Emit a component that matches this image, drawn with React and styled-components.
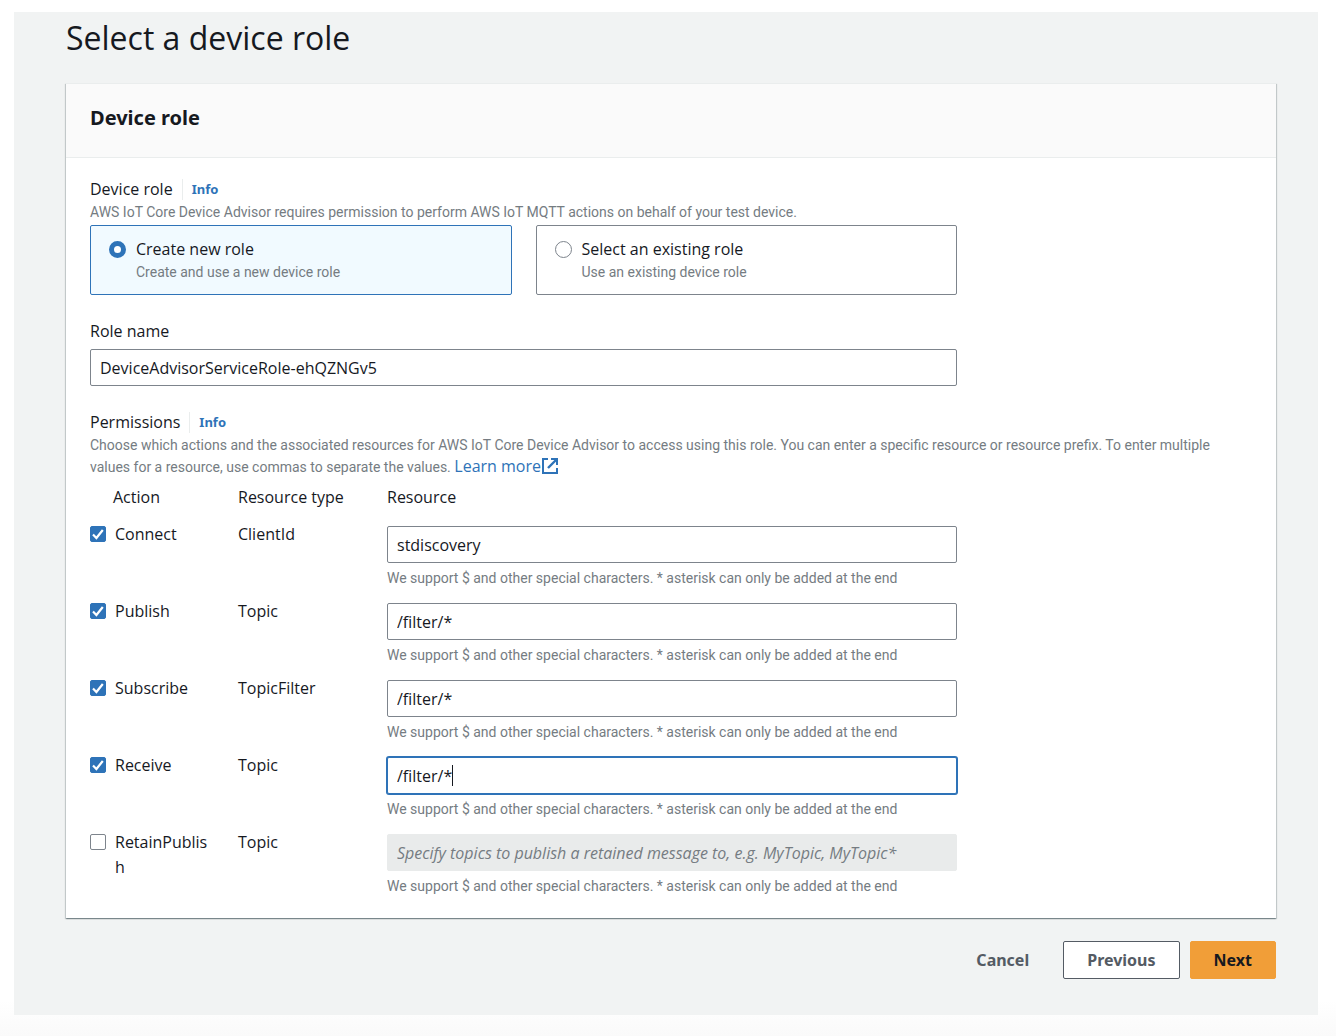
import React, { useEffect, useRef, useState } from "react";
import styled, { createGlobalStyle, css } from "styled-components";

const color = {
  text: "#16191f",
  muted: "#757c82",
  line: "#7d848c",
  rule: "#eaeded",
  blue: "#2e73b8",
  page: "#f1f3f3",
};

const font = {
  body: `"Open Sans", "Noto Sans", sans-serif`,
  strong: `"Noto Sans", "Open Sans", sans-serif`,
  small: `Roboto, "Open Sans", sans-serif`,
};

const GlobalStyle = createGlobalStyle`
  *, *::before, *::after { box-sizing: border-box; }
  html { min-height: 100%; background: linear-gradient(#fff, #fff calc(100% - 36px), #fafafa); }
  body {
    margin: 0;
    font: 400 16px/24px ${font.body};
    color: ${color.text};
  }
  input, button { font: inherit; color: inherit; }
`;

const Page = styled.main`
  margin: 12px 18px 20px 14px;
  padding: 4px 42px 36px 52px;
  background: ${color.page};
`;

const Title = styled.h1`
  margin: 0 0 23px;
  font-size: 32px;
  line-height: 44px;
  font-weight: 400;
`;

const Card = styled.section`
  background: #fff;
  border-top: 1px solid ${color.rule};
  box-shadow:
    0 1px 1px 0 rgba(0, 28, 36, 0.3),
    1px 1px 1px 0 rgba(0, 28, 36, 0.15),
    -1px 1px 1px 0 rgba(0, 28, 36, 0.15);
`;

const CardHeader = styled.header`
  padding: 20px 24px 25px;
  background: #fafafa;
  border-bottom: 1px solid ${color.rule};
`;

const CardTitle = styled.h2`
  margin: 0;
  font-family: ${font.strong};
  font-size: 20px;
  line-height: 28px;
  font-weight: 700;
`;

const CardBody = styled.div`
  display: grid;
  gap: 24px;
  padding: 19px 24px 21px;
`;

const Group = styled.fieldset`
  margin: 0;
  padding: 0;
  border: 0;
  min-width: 0;
`;

const LabelRow = styled.div`
  display: flex;
  align-items: center;
  height: 24px;
`;

const InfoLink = styled.a`
  margin-left: 9px;
  padding-left: 9px;
  border-left: 1px solid ${color.rule};
  color: ${color.blue};
  font-family: ${font.strong};
  font-size: 13px;
  line-height: 21px;
  font-weight: 700;
  text-decoration: none;
`;

const Description = styled.p`
  margin: 0;
  padding-right: 24px;
  color: ${color.muted};
  font-family: ${font.small};
  font-size: 14px;
  line-height: 22px;
`;

const LearnMore = styled.a`
  color: ${color.blue};
  font-family: ${font.body};
  font-size: 16px;
  line-height: 20px;
  text-decoration: none;
  white-space: nowrap;

  svg {
    width: 16px;
    height: 16px;
    margin-left: 1px;
    vertical-align: -2px;
  }
`;

const Tiles = styled.div`
  display: grid;
  grid-template-columns: 1fr 1fr;
  gap: 24px;
  max-width: 867px;
  margin-top: 2px;
`;

const Tile = styled.label`
  display: flex;
  gap: 10px;
  padding: 11px 18px;
  border: 1px solid ${(p) => (p.$selected ? color.blue : color.line)};
  border-radius: 2px;
  background: ${(p) => (p.$selected ? "#f1faff" : "#fff")};
`;

const Radio = styled.input`
  appearance: none;
  flex: none;
  width: 17px;
  height: 17px;
  margin: 4px 0 0;
  border: 1px solid ${color.line};
  border-radius: 50%;
  background: #fff;

  &:checked {
    border: 5px solid ${color.blue};
  }
`;

const TileText = styled.span`
  display: grid;
`;

const Hint = styled.span`
  display: block;
  color: ${color.muted};
  font-family: ${font.small};
  font-size: 14px;
  line-height: 22px;
`;

const Field = styled.div`
  display: grid;
  gap: 6px;
  max-width: 867px;
`;

const InputFrame = styled.div`
  position: relative;
`;

const Caret = styled.span`
  position: absolute;
  top: 8px;
  width: 1px;
  height: 21px;
  background: ${color.text};
  pointer-events: none;
`;

const TextInput = styled.input`
  display: block;
  width: 100%;
  height: 37px;
  padding: 0 9px;
  border: 1px solid ${color.line};
  border-radius: 2px;
  background: #fff;
  outline: none;
  caret-color: transparent;

  &:focus {
    border-color: ${color.blue};
    box-shadow: 0 0 0 1px ${color.blue};
  }

  &:disabled {
    border-color: #e9ebeb;
    background: #e9ebeb;
  }

  &::placeholder {
    color: ${color.muted};
    font-style: italic;
    opacity: 1;
  }
`;

const Permissions = styled.table`
  width: 100%;
  max-width: 867px;
  margin-top: 7px;
  table-layout: fixed;
  border-collapse: collapse;
`;

const HeadCell = styled.th`
  width: ${(p) => p.$width || "auto"};
  height: 27px;
  padding: 0 0 0 ${(p) => p.$indent || "0"};
  font-weight: 400;
  text-align: left;
  vertical-align: top;
`;

const Cell = styled.td`
  padding: ${(p) => (p.$field ? "14px" : "10px")} 0 0;
  vertical-align: top;
  line-height: 25px;
`;

const CheckLabel = styled.label`
  display: flex;
  gap: 9px;
  width: 119px;
  word-break: break-all;
`;

const CheckBox = styled.span`
  display: grid;
  flex: none;
  width: 16px;
  height: 16px;
  margin-top: 4px;

  input,
  svg {
    grid-area: 1 / 1;
    width: 16px;
    height: 16px;
  }

  input {
    appearance: none;
    margin: 0;
    border: 1px solid ${color.line};
    border-radius: 2px;
    background: #fff;
  }

  input:checked {
    border-color: ${color.blue};
    background: ${color.blue};
  }

  svg {
    pointer-events: none;
  }
`;

const FieldHint = styled(Hint)`
  margin-top: 4px;
`;

const Actions = styled.footer`
  display: flex;
  justify-content: flex-end;
  gap: 10px;
  margin-top: 23px;
`;

const Button = styled.button`
  height: 38px;
  padding: 0 23px;
  border: 1px solid transparent;
  border-radius: 2px;
  background: transparent;
  color: #545b64;
  font-family: ${font.strong};
  font-weight: 700;

  ${(p) => p.$variant === "normal" && css`
    background: #fff;
    border-color: #545b64;
  `}
  ${(p) => p.$variant === "primary" && css`
    background: #f19e38;
    border-color: #f19e38;
    color: ${color.text};
  `}
`;

const ExternalIcon = () => (
  <svg viewBox="0 0 16 16" fill="none" stroke="currentColor" strokeWidth="2" aria-hidden="true">
    <path d="M6 1H1v14h14v-5" />
    <path d="M9 1h6v6" />
    <path d="M14.5 1.5 6 10" strokeWidth="2.4" />
  </svg>
);

const CheckIcon = () => (
  <svg viewBox="0 0 16 16" fill="none" stroke="#fff" strokeWidth="2.2" aria-hidden="true">
    <path d="M3 8.5 6.4 12 12.8 4" />
  </svg>
);

function measure(el, end) {
  const ctx = document.createElement("canvas").getContext("2d");
  const style = getComputedStyle(el);
  ctx.font = `${style.fontWeight} ${style.fontSize} ${style.fontFamily}`;
  return Math.round(ctx.measureText(el.value.slice(0, end)).width);
}

function TextField({ autoFocus, onChange, ...rest }) {
  const ref = useRef(null);
  const [caret, setCaret] = useState(null);

  const track = () => {
    const el = ref.current;
    setCaret(10 + measure(el, el.selectionEnd) - el.scrollLeft);
  };

  useEffect(() => {
    if (!autoFocus) return;
    const el = ref.current;
    el.focus();
    el.setSelectionRange(el.value.length, el.value.length);
    track();
  }, [autoFocus]);

  return (
    <InputFrame>
      <TextInput
        ref={ref}
        type="text"
        onChange={(e) => {
          onChange(e.target.value);
          track();
        }}
        onFocus={track}
        onSelect={track}
        onBlur={() => setCaret(null)}
        {...rest}
      />
      {caret !== null && <Caret style={{ left: caret }} />}
    </InputFrame>
  );
}

const initialRows = [
  { action: "Connect", type: "ClientId", value: "stdiscovery", on: true },
  { action: "Publish", type: "Topic", value: "/filter/*", on: true },
  { action: "Subscribe", type: "TopicFilter", value: "/filter/*", on: true },
  { action: "Receive", type: "Topic", value: "/filter/*", on: true },
  {
    action: "RetainPublish",
    type: "Topic",
    value: "",
    on: false,
    placeholder: "Specify topics to publish a retained message to, e.g. MyTopic, MyTopic*",
  },
];

function PermissionRow({ row, onChange }) {
  return (
    <tr>
      <Cell>
        <CheckLabel>
          <CheckBox>
            <input
              type="checkbox"
              checked={row.on}
              onChange={(e) => onChange({ on: e.target.checked })}
            />
            {row.on && <CheckIcon />}
          </CheckBox>
          <span>{row.action}</span>
        </CheckLabel>
      </Cell>
      <Cell>{row.type}</Cell>
      <Cell $field>
        <TextField
          autoFocus={row.action === "Receive"}
          aria-label={`${row.action} resource`}
          value={row.value}
          placeholder={row.placeholder}
          disabled={!row.on}
          onChange={(value) => onChange({ value })}
        />
        <FieldHint>
          We support $ and other special characters. * asterisk can only be added at the end
        </FieldHint>
      </Cell>
    </tr>
  );
}

export default function App() {
  const [mode, setMode] = useState("new");
  const [roleName, setRoleName] = useState("DeviceAdvisorServiceRole-ehQZNGv5");
  const [rows, setRows] = useState(initialRows);

  const update = (index, patch) =>
    setRows((list) => list.map((r, i) => (i === index ? { ...r, ...patch } : r)));

  return (
    <>
      <GlobalStyle />
      <Page>
        <Title>Select a device role</Title>
        <Card>
          <CardHeader>
            <CardTitle>Device role</CardTitle>
          </CardHeader>
          <CardBody>
            <Group aria-labelledby="device-role">
              <LabelRow>
                <span id="device-role">Device role</span>
                <InfoLink href="#info-role">Info</InfoLink>
              </LabelRow>
              <Description>
                AWS IoT Core Device Advisor requires permission to perform AWS IoT MQTT actions on
                behalf of your test device.
              </Description>
              <Tiles>
                <Tile $selected={mode === "new"}>
                  <Radio
                    type="radio"
                    name="mode"
                    checked={mode === "new"}
                    onChange={() => setMode("new")}
                  />
                  <TileText>
                    Create new role
                    <Hint>Create and use a new device role</Hint>
                  </TileText>
                </Tile>
                <Tile $selected={mode === "existing"}>
                  <Radio
                    type="radio"
                    name="mode"
                    checked={mode === "existing"}
                    onChange={() => setMode("existing")}
                  />
                  <TileText>
                    Select an existing role
                    <Hint>Use an existing device role</Hint>
                  </TileText>
                </Tile>
              </Tiles>
            </Group>

            <Field>
              <label htmlFor="role-name">Role name</label>
              <TextField id="role-name" value={roleName} onChange={setRoleName} />
            </Field>

            <Group aria-labelledby="permissions">
              <LabelRow>
                <span id="permissions">Permissions</span>
                <InfoLink href="#info-permissions">Info</InfoLink>
              </LabelRow>
              <Description>
                Choose which actions and the associated resources for AWS IoT Core Device Advisor to
                access using this role. You can enter a specific resource or resource prefix. To
                enter multiple values for a resource, use commas to separate the values.{" "}
                <LearnMore href="#learn-more">
                  Learn more
                  <ExternalIcon />
                </LearnMore>
              </Description>
              <Permissions>
                <thead>
                  <tr>
                    <HeadCell $width="148px" $indent="23px">Action</HeadCell>
                    <HeadCell $width="149px">Resource type</HeadCell>
                    <HeadCell>Resource</HeadCell>
                  </tr>
                </thead>
                <tbody>
                  {rows.map((row, i) => (
                    <PermissionRow
                      key={row.action}
                      row={row}
                      onChange={(patch) => update(i, patch)}
                    />
                  ))}
                </tbody>
              </Permissions>
            </Group>
          </CardBody>
        </Card>
        <Actions>
          <Button type="button">Cancel</Button>
          <Button type="button" $variant="normal">Previous</Button>
          <Button type="button" $variant="primary">Next</Button>
        </Actions>
      </Page>
    </>
  );
}
